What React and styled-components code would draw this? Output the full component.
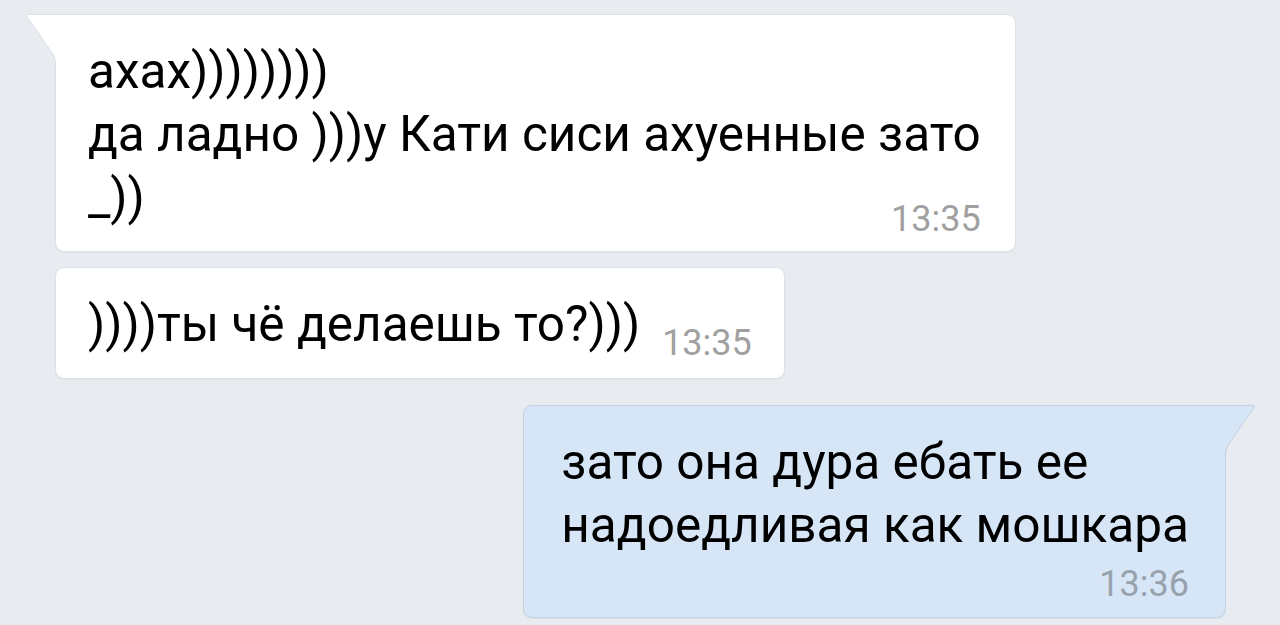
import React from "react";
import styled, { createGlobalStyle } from "styled-components";

const Global = createGlobalStyle`
  html, body { margin: 0; padding: 0; background: #e8ecf1; }
  body {
    font-family: Roboto, "Noto Sans", "Liberation Sans", sans-serif;
    -webkit-font-smoothing: antialiased;
  }
`;

const Feed = styled.div`
  display: flex;
  flex-direction: column;
  align-items: flex-start;
  box-sizing: border-box;
  min-height: 625px;
  padding: 14px 54px 0 55px;
`;

const Bubble = styled.div`
  position: relative;
  box-sizing: border-box;
  display: flex;
  flex-direction: column;
  align-self: ${(p) => (p.$out ? "flex-end" : "flex-start")};
  margin-top: ${(p) => p.$gap || 0}px;
  background: ${(p) => (p.$out ? "#d7e6f7" : "#ffffff")};
  border: 1px solid ${(p) => (p.$out ? "#c3d2e3" : "#dce1e7")};
  border-radius: 9px;
  border-top-left-radius: ${(p) => (p.$tail && !p.$out ? 0 : 9)}px;
  border-top-right-radius: ${(p) => (p.$tail && p.$out ? 0 : 9)}px;
  box-shadow: 0 1px 1px rgba(40, 60, 90, 0.06);
  padding: ${(p) => p.$pad};
`;

const Text = styled.div`
  font-size: 49.5px;
  line-height: 63px;
  color: #000;
  white-space: pre-line;
  margin-bottom: ${(p) => p.$mb || 0}px;
`;

const LastRow = styled.div`
  display: flex;
  align-items: flex-end;
  justify-content: ${(p) => (p.$alone ? "flex-end" : "space-between")};
  column-gap: 22px;
  margin-top: ${(p) => p.$mt || 0}px;
`;

const Time = styled.span`
  font-size: 36px;
  line-height: 36px;
  font-stretch: 92%;
  color: ${(p) => (p.$out ? "#97a2ad" : "#a0a0a0")};
  white-space: nowrap;
`;

const TailSvg = styled.svg`
  position: absolute;
  top: -1px;
  ${(p) => (p.$out ? "right: -31px; transform: scaleX(-1);" : "left: -31px;")}
  width: 32px;
  height: 58px;
  overflow: visible;
`;

function Tail({ out }) {
  const fill = out ? "#d7e6f7" : "#ffffff";
  const stroke = out ? "#c3d2e3" : "#dce1e7";
  return (
    <TailSvg $out={out} viewBox="0 0 32 58">
      <path
        d="M32 0 L3 0 Q0 0 1.6 2.6 L27 38.5 Q30.5 43.5 30.5 50 L30.5 58 L32 58 Z"
        fill={fill}
      />
      <path
        d="M32 0.5 L3 0.5 Q0.6 0.5 1.9 2.7 L27 38.5 Q30.5 43.5 30.5 50 L30.5 58"
        fill="none"
        stroke={stroke}
        strokeWidth="1"
      />
    </TailSvg>
  );
}

export default function App() {
  return (
    <>
      <Global />
      <Feed>
        <Bubble $tail $pad="25px 34px 14px 32px">
          <Tail />
          <Text>{"ахах))))))))\nда ладно )))у Кати сиси ахуенные зато"}</Text>
          <LastRow>
            <Text $mb={8}>_))</Text>
            <Time>13:35</Time>
          </LastRow>
        </Bubble>
        <Bubble $gap={15} $pad="25px 32px 17px 32px">
          <LastRow>
            <Text $mb={5}>))))ты чё делаешь то?)))</Text>
            <Time>13:35</Time>
          </LastRow>
        </Bubble>
        <Bubble $out $tail $gap={26} $pad="25px 36px 15px 37px">
          <Tail out />
          <Text>{"зато она дура ебать ее\nнадоедливая как мошкара"}</Text>
          <LastRow $alone $mt={9}>
            <Time $out>13:36</Time>
          </LastRow>
        </Bubble>
      </Feed>
    </>
  );
}
